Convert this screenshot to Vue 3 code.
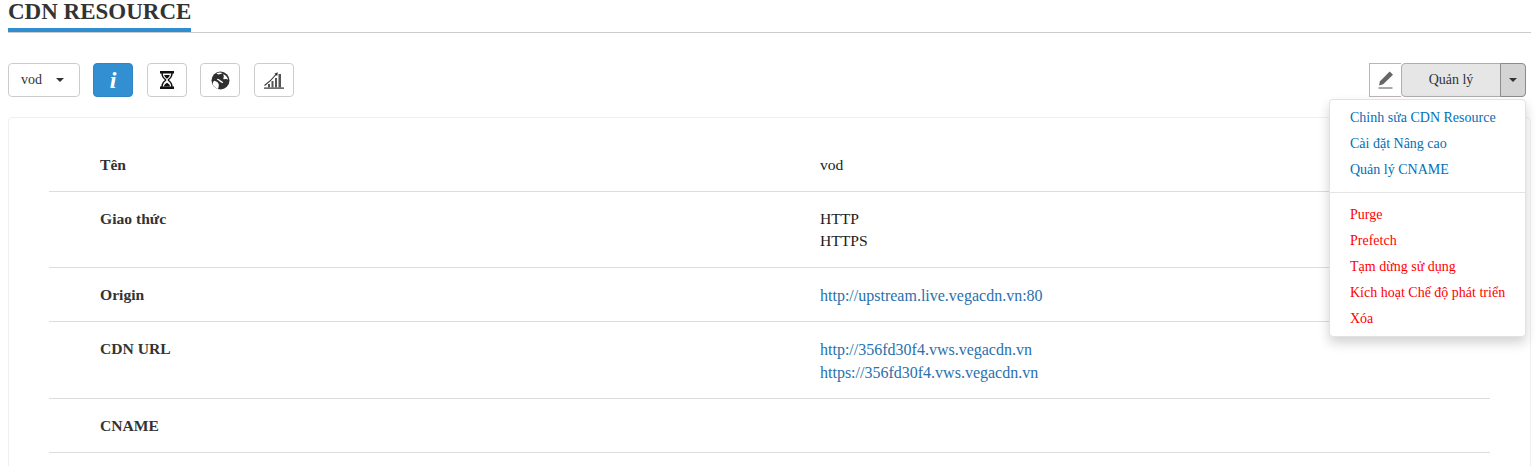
<script setup>
const rows = [
  { label: 'Tên', values: ['vod'] },
  { label: 'Giao thức', values: ['HTTP', 'HTTPS'] },
  { label: 'Origin', links: ['http://upstream.live.vegacdn.vn:80'] },
  { label: 'CDN URL', links: ['http://356fd30f4.vws.vegacdn.vn', 'https://356fd30f4.vws.vegacdn.vn'] },
  { label: 'CNAME', values: [] },
]
const blueItems = ['Chỉnh sửa CDN Resource', 'Cài đặt Nâng cao', 'Quản lý CNAME']
const redItems = ['Purge', 'Prefetch', 'Tạm dừng sử dụng', 'Kích hoạt Chế độ phát triển', 'Xóa']
</script>

<template>
  <div class="page">
    <div class="title-bar"><h1 class="title">CDN RESOURCE</h1></div>

    <div class="toolbar">
      <button class="btn select">vod <span class="caret"></span></button>
      <button class="btn icon active"><span class="info">i</span></button>
      <button class="btn icon">
        <svg width="16" height="20" viewBox="0 0 16 20">
          <path fill="#111" d="M1 1h14v2.500h-1.300c0 3-1.700 5-3.700 6.500 2 1.500 3.700 3.500 3.700 6.500H15V19H1v-2.500h1.300c0-3 1.700-5 3.700-6.500-2-1.500-3.700-3.500-3.700-6.500H1z"/>
          <path fill="#fff" d="M3.800 3.500h8.400c0 2.700-1.600 4.500-3.400 5.800v1.400c1.800 1.300 3.400 3.100 3.400 5.800H3.800c0-2.700 1.600-4.500 3.400-5.800V9.300C5.400 8 3.800 6.200 3.800 3.500z"/>
          <path fill="#111" d="M5.200 5h5.600C10.300 6.700 9.200 7.800 8 8.700 6.800 7.800 5.700 6.700 5.200 5zM4.800 16.500C5.200 14.800 6.600 13.400 8 12.700c1.400.7 2.800 2.100 3.200 3.800z"/>
        </svg>
      </button>
      <button class="btn icon">
        <svg width="19" height="19" viewBox="0 0 19 19">
          <circle cx="9.500" cy="9.500" r="9" fill="#2e2e2e"/>
          <path fill="#fff" d="M5.500 2.200C7.500 1.500 10 1.300 11.800 2.200 10.500 2.400 9.800 3 8.800 3.300 7.600 3.700 6.400 3.200 5.500 2.200z"/>
          <path fill="#fff" d="M12.600 3.300c1.800.8 3.300 2.300 4.100 4.200.4 1-.1 1.200-.8.800-.9-.5-1.600-.5-2.400-.1-.7.300-1.400-.2-1.100-1 .3-.9.600-1.400.3-2.200-.2-.6-.6-1-.1-1.700z"/>
          <path fill="#fff" d="M3 9.800c1.300.1 2.500.6 3.500 1.500 1 .9 1.400 2 1.300 3.300-.1 1.300-.3 2.500-.8 3.400C4.700 17.200 2.600 15.300 1.500 13c.3-1.300.7-2.400 1.500-3.200z"/>
          <path fill="#fff" d="M6.500 7.800c1.100.2 2 .7 2.900 1.400.8.600 1.700 1 2.500 1.800.5.500.2 1-.4.900-1.100-.2-1.900-.8-2.800-1.500-.8-.6-1.700-1-2.500-1.600-.4-.4-.2-.9.300-1z"/>
        </svg>
      </button>
      <button class="btn icon">
        <svg width="20" height="18" viewBox="0 0 20 18">
          <rect x="0" y="16.500" width="20" height="1.200" fill="#333"/>
          <g fill="#555">
            <rect x="4" y="13" width="2" height="3.500"/>
            <rect x="7.500" y="10" width="2" height="6.500"/>
            <rect x="11" y="7" width="2" height="9.500"/>
            <rect x="14.500" y="3" width="2.500" height="13.500"/>
          </g>
          <path d="M0.500 14.500 C4 12 8 8.500 12 3.500" fill="none" stroke="#333" stroke-width="1.100"/>
          <path d="M10.300 2.800 13.800 1.300 13.200 5z" fill="#333"/>
        </svg>
      </button>

      <div class="spacer"></div>

      <button class="edit">
        <svg width="16" height="18" viewBox="0 0 16 18">
          <path fill="#666" d="M11.700 0.500 15 3.800 5.200 13.300 1 14.500 2 10.300z"/>
          <rect x="0.500" y="16.500" width="14" height="1" fill="#555"/>
        </svg>
      </button>
      <div class="manage-group">
        <button class="manage">Quản lý</button>
        <button class="manage-caret"><span class="caret"></span></button>
        <div class="menu">
          <a v-for="item in blueItems" :key="item" class="menu-item blue">{{ item }}</a>
          <div class="divider"></div>
          <a v-for="item in redItems" :key="item" class="menu-item red">{{ item }}</a>
        </div>
      </div>
    </div>

    <div class="card">
      <div v-for="row in rows" :key="row.label" class="row" :class="{ 'row-links': row.links }">
        <div class="label">{{ row.label }}</div>
        <div class="value">
          <div v-for="v in row.values" :key="v">{{ v }}</div>
          <div v-for="l in row.links" :key="l" class="link-line"><a class="link">{{ l }}</a></div>
        </div>
      </div>
    </div>
  </div>
</template>

<style>
html, body { margin: 0; background: #fff; overflow: hidden; }
</style>

<style scoped>
.page {
  width: 1537px;
  height: 466px;
  overflow: hidden;
  box-sizing: border-box;
  padding: 0 6px 0 8px;
  font-family: "Liberation Serif", "Times New Roman", serif;
  font-size: 14px;
  color: #333;
}
.title-bar { border-bottom: 1px solid #ccc; height: 32px; box-sizing: content-box; }
.title {
  display: inline-block;
  margin: 0;
  height: 28px;
  line-height: 23px;
  font-size: 23px;
  font-weight: 700;
  color: #333;
  border-bottom: 4px solid #2f8dd0;
}
.toolbar { display: flex; align-items: flex-start; margin-top: 30px; height: 54px; }
.btn {
  box-sizing: border-box;
  height: 34px;
  background: #fff;
  border: 1px solid #ccc;
  border-radius: 4px;
  font: inherit;
  color: #333;
  padding: 0;
  display: flex;
  align-items: center;
  justify-content: center;
}
.select { width: 72px; margin-right: 13px; justify-content: flex-start; padding-left: 12px; }
.select .caret { margin-left: 14px; }
.icon { width: 40px; margin-right: 13.5px; }
.active { background: #318fd2; border-color: #2e86c4; }
.info {
  color: #fff;
  font-size: 24px;
  font-weight: 700;
  font-style: italic;
  line-height: 24px;
}
.caret {
  display: inline-block;
  width: 0;
  height: 0;
  border-top: 4px solid #333;
  border-left: 4px solid transparent;
  border-right: 4px solid transparent;
}
.spacer { flex: 1; }
.edit {
  box-sizing: border-box;
  width: 32px;
  height: 34px;
  padding: 0;
  background: #fff;
  border: 1px solid #bdb2b6;
  border-right: 0;
  display: flex;
  align-items: center;
  justify-content: center;
}
.manage-group { position: relative; display: flex; margin-right: 5px; }
.manage {
  box-sizing: border-box;
  width: 100px;
  height: 34px;
  background: #e6e6e6;
  border: 1px solid #adadad;
  border-radius: 4px 0 0 4px;
  font: inherit;
  color: #333;
  padding: 0;
}
.manage-caret {
  box-sizing: border-box;
  width: 26px;
  height: 34px;
  margin-left: -1px;
  background: #d4d4d4;
  border: 1px solid #8c8c8c;
  border-radius: 0 4px 4px 0;
  padding: 0;
  display: flex;
  align-items: center;
  justify-content: center;
}
.menu {
  position: absolute;
  z-index: 10;
  top: 36px;
  right: 0;
  box-sizing: border-box;
  width: 197px;
  height: 238px;
  padding: 5px 0;
  background: #fff;
  border: 1px solid #e2e2e2;
  border-radius: 4px;
  box-shadow: 0 6px 12px rgba(0, 0, 0, .175);
}
.menu-item {
  display: block;
  padding: 0 0 0 20px;
  height: 26px;
  line-height: 26px;
  white-space: nowrap;
}
.blue { color: #0070b8; }
.red { color: #f00; }
.divider { height: 1px; background: #e5e5e5; margin: 9px 0 9px; }
.card {
  box-sizing: border-box;
  height: 400px;
  padding: 20px 40px 0 40px;
  border: 1px solid #f0f0f0;
  border-radius: 4px;
}
.row {
  display: flex;
  box-sizing: border-box;
  border-bottom: 1px solid #ddd;
  padding: 16px 0 15px;
  line-height: 22px;
  color: #222;
  font-size: 15.6px;
}
.row-links { padding-bottom: 14px; }
.label { width: 771px; padding-left: 51px; box-sizing: border-box; font-weight: 700; color: #333; }
.value { flex: 1; min-height: 22px; }
.link-line { line-height: 23px; font-size: 16px; }
.link { color: #2a70ad; }
</style>
